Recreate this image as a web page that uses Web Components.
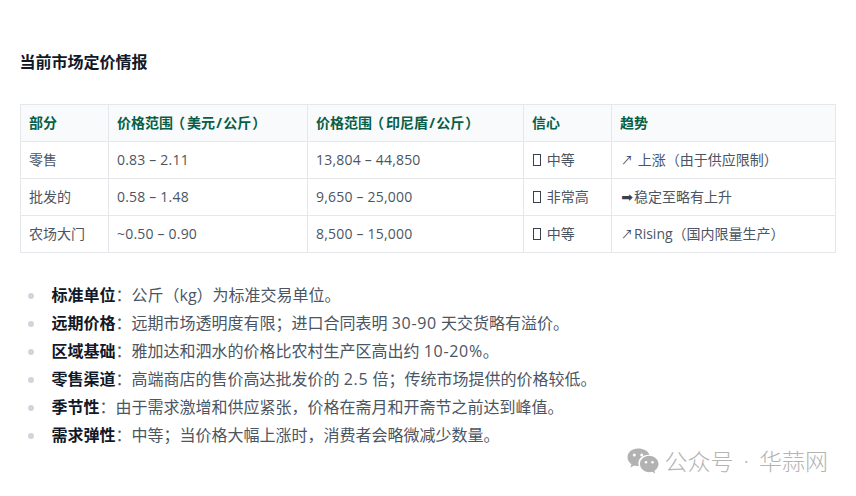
<!DOCTYPE html>
<html lang="zh"><head><meta charset="utf-8">
<style>
html,body{margin:0;padding:0;background:#fff}
body{font-family:"Open Sans","Noto Sans CJK SC",sans-serif;width:856px;height:496px;overflow:hidden;position:relative}
</style></head><body>
<price-report>
<span slot="title">当前市场定价情报</span>
</price-report>
<water-mark></water-mark>
<script>
const FONT='"Open Sans","Noto Sans CJK SC",sans-serif';
class PriceTable extends HTMLElement{
  constructor(){super();const s=this.attachShadow({mode:'open'});
  const head=['部分','价格范围<u class="l">（</u>美元<s>/</s>公斤<u class="r">）</u>','价格范围<u class="l">（</u>印尼盾<s>/</s>公斤<u class="r">）</u>','信心','趋势'];
  const rows=[
   ['零售','<em>0.83 – 2.11</em>','<em>13,804 – 44,850</em>','<i></i> 中等','<b class="a">↗</b> 上涨（由于供应限制）'],
   ['批发的','<em>0.58 – 1.48</em>','<em>9,650 – 25,000</em>','<i></i> 非常高','<b>➡</b>稳定至略有上升'],
   ['农场大门','<em>~0.50 – 0.90</em>','<em>8,500 – 15,000</em>','<i></i> 中等','<b class="a">↗</b>Rising（国内限量生产）']];
  s.innerHTML=`<style>
  :host{display:block;margin:0 20px}
  .t{display:grid;grid-template-columns:88px 199px 216px 88px 224px;grid-auto-rows:37px;border-right:1px solid #e5e7eb;border-bottom:1px solid #e5e7eb;box-sizing:border-box;width:816px;height:149px;font:14px/20px ${FONT};color:#4b5563}
  .c{border-left:1px solid #e5e7eb;border-top:1px solid #e5e7eb;padding:0 8px;display:flex;align-items:center;white-space:pre}
  .h{background:#f9fafb;color:#065f46;font-weight:700}
  em{font-style:normal;letter-spacing:.2px}
  s{text-decoration:none;padding:0 1.2px}
  u{text-decoration:none;display:inline-block;font-feature-settings:"halt"}
  u.l{padding:0 2px 0 5px}
  u.r{padding:0 6px 0 1px}
  i{display:inline-block;width:6px;height:10px;border:1px solid #374151;margin:0 2px 0 1px}
  b{font:14px/20px "DejaVu Sans",sans-serif;color:#374151;font-weight:400;display:inline-block;width:14px;text-align:center}
  b.a{font:12px/20px "Noto Sans CJK SC",sans-serif}
  </style><div class="t">${head.map(x=>`<div class="c h">${x}</div>`).join('')}${rows.map(r=>r.map(x=>`<div class="c">${x}</div>`).join('')).join('')}</div>`;}
}
class BulletList extends HTMLElement{
  constructor(){super();const s=this.attachShadow({mode:'open'});
  const items=[['标准单位','公斤（kg）为标准交易单位。'],['远期价格','远期市场透明度有限；进口合同表明 <em>30-90</em> 天交货略有溢价。'],['区域基础','雅加达和泗水的价格比农村生产区高出约 <em>10-20%</em>。'],['零售渠道','高端商店的售价高达批发价的 <em>2.5</em> 倍；传统市场提供的价格较低。'],['季节性','由于需求激增和供应紧张，价格在斋月和开斋节之前达到峰值。'],['需求弹性','中等；当价格大幅上涨时，消费者会略微减少数量。']];
  s.innerHTML=`<style>
  :host{display:block;margin:0 20px}
  ul{margin:0;padding:0;list-style:none;font:16px/28px ${FONT};color:#4b5563}
  li{display:flex;align-items:center;white-space:pre;padding-left:8px;height:28px}
  li::before{content:"";width:6px;height:6px;border-radius:50%;background:#d1d5db;margin-right:17.500px}
  li span{margin-top:-2px}
  strong{color:#111827;font-weight:700}
  em{font-style:normal;letter-spacing:.7px}
  </style><ul>${items.map(i=>`<li><span><strong>${i[0]}</strong>：${i[1]}</span></li>`).join('')}</ul>`;}
}
class PriceReport extends HTMLElement{
  constructor(){super();const s=this.attachShadow({mode:'open'});
  s.innerHTML=`<style>
  :host{display:flex;flex-direction:column;padding-top:50px}
  h3{margin:0 20px 0 19.5px;font:700 16px/24px ${FONT};color:#111827}
  price-table{margin-top:30px}
  bullet-list{margin-top:29px}
  </style><h3><slot name="title"></slot></h3><price-table></price-table><bullet-list></bullet-list>`;}
}
class WaterMark extends HTMLElement{
  constructor(){super();const s=this.attachShadow({mode:'open'});
  s.innerHTML=`<style>
  :host{position:absolute;left:627px;top:446px;display:flex;align-items:center;gap:5.500px;font:300 23px/30px ${FONT};color:#b4b4b4;white-space:pre;word-spacing:4px}
  svg{width:32px;height:26px;flex:none}
  </style><svg viewBox="0 0 32 26"><path fill="#b2b2b2" d="M11 0.5C5 0.5 .5 4.4 .5 9.3c0 2.8 1.5 5.2 3.9 6.9L3.4 19.500l3.800-2.100c1.200.4 2.500.6 3.800.6h.9c-.4-1-.5-2-.5-2.800 0-4.900 4.400-8.500 10-8.500h.9C21.300 3 16.600.5 11 .5z"/><ellipse fill="#fff" cx="7.300" cy="6.900" rx="1.500" ry="1.500"/><ellipse fill="#fff" cx="14.700" cy="6.900" rx="1.500" ry="1.500"/><path fill="#b2b2b2" d="M31.500 16c0-4.500-4.200-8.200-9.300-8.200S13 11.500 13 16s4.200 8.200 9.200 8.200c1.100 0 2.100-.2 3.100-.5l2.900 1.700-.8-2.700c2.500-1.500 4.100-3.900 4.100-6.700z"/><ellipse fill="#fff" cx="19" cy="14.300" rx="1.300" ry="1.300"/><ellipse fill="#fff" cx="25.500" cy="14.300" rx="1.300" ry="1.300"/></svg><span>公众号 · 华蒜网</span>`;}
}
customElements.define('price-table',PriceTable);
customElements.define('bullet-list',BulletList);
customElements.define('price-report',PriceReport);
customElements.define('water-mark',WaterMark);
</script>
</body></html>
